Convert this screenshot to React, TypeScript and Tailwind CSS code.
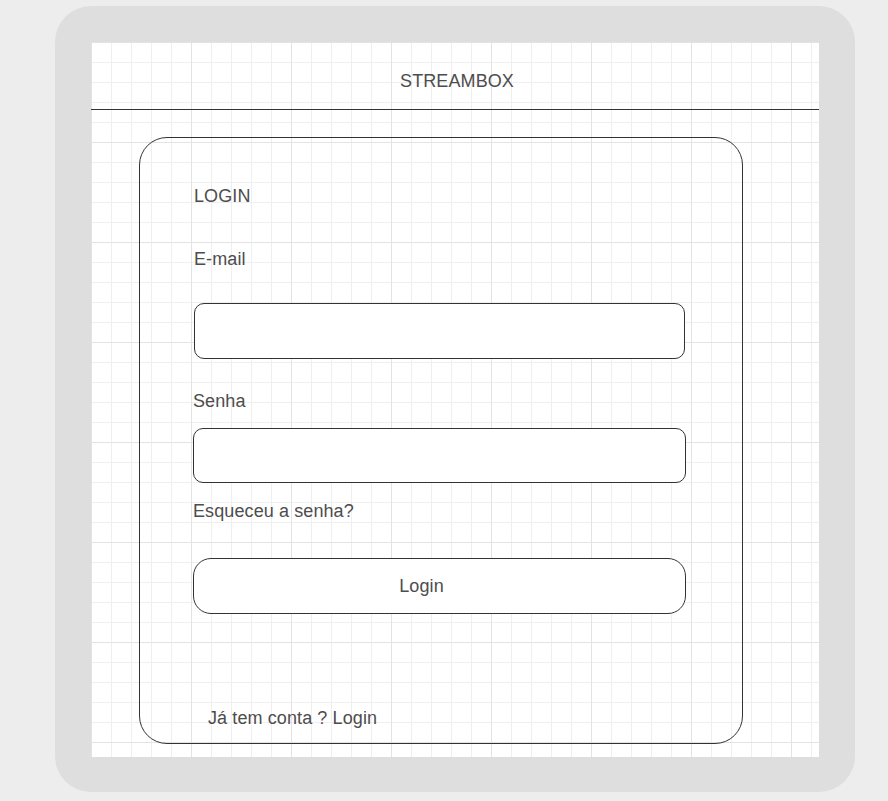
import React from 'react';

const grid =
  'bg-white bg-[linear-gradient(to_right,#e3e3e3_1px,transparent_1px),linear-gradient(to_bottom,#e3e3e3_1px,transparent_1px),linear-gradient(to_right,#efefef_1px,transparent_1px),linear-gradient(to_bottom,#efefef_1px,transparent_1px)] bg-[size:100px_100px,100px_100px,20px_20px,20px_20px]';

export default function App() {
  return (
    <div
      className="min-h-[801px] w-full bg-[#ededed] pt-[6px] text-[#4d4d4d]"
      style={{ fontFamily: '"Liberation Sans", Arial, sans-serif' }}
    >
      <div className="ml-[55px] h-[786px] w-[800px] rounded-[36px] bg-[#dedede] p-[36px]">
        <div className={`h-[715px] w-[728px] ${grid}`}>
          {/* header */}
          <div className="flex h-[68px] items-center justify-center border-b border-[#333333] pl-[4px] pt-[10px] text-[18px] leading-[20px] tracking-[0.1px]">
            STREAMBOX
          </div>

          {/* login card */}
          <div className="ml-[48px] mt-[27px] flex h-[607px] w-[604px] flex-col rounded-[28px] border border-[#333333] pl-[53px] text-[18px] leading-[20px] tracking-[0.1px]">
            <div className="ml-px mt-[48px]">LOGIN</div>
            <div className="ml-px mt-[43px]">E-mail</div>
            <div className="ml-px mt-[34px] h-[56px] w-[491px] rounded-[10px] border border-[#333333] bg-white" />
            <div className="mt-[32px]">Senha</div>
            <div className="mt-[17px] h-[55px] w-[493px] rounded-[10px] border border-[#333333] bg-white" />
            <div className="mt-[18px]">Esqueceu a senha?</div>
            <button className="mt-[37px] flex h-[56px] w-[493px] items-center justify-center rounded-[18px] border border-[#333333] bg-white pr-[36px] text-[18px] tracking-[0.1px] text-[#4d4d4d]">
              Login
            </button>
            <div className="ml-[15px] mt-[94px]">Já tem conta ? Login</div>
          </div>
        </div>
      </div>
    </div>
  );
}
